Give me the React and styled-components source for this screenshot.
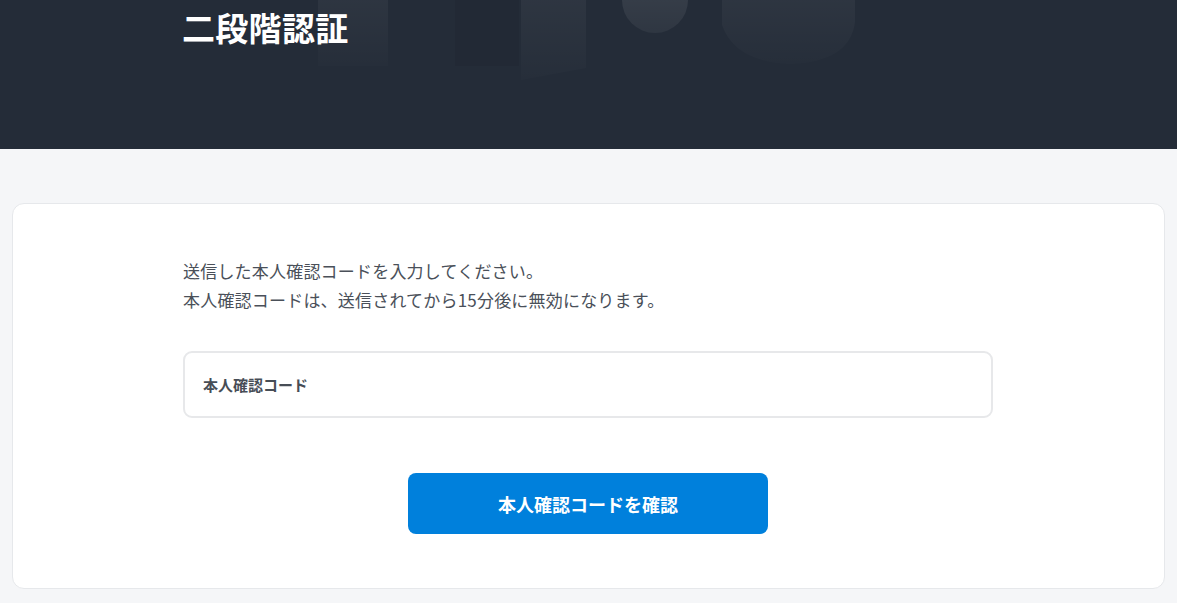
import React from "react";
import styled, { createGlobalStyle } from "styled-components";

const Global = createGlobalStyle`
  html, body {
    margin: 0;
    padding: 0;
    background: #f5f6f8;
    font-family: "Noto Sans CJK JP", "Noto Sans", sans-serif;
  }
`;

const Page = styled.div`
  min-height: 603px;
  background: #f5f6f8;
`;

const Hero = styled.header`
  position: relative;
  height: 149px;
  background: #242c38;
  overflow: hidden;
`;

const Decor = styled.svg`
  position: absolute;
  left: 0;
  top: 0;
  pointer-events: none;
`;

const HeroInner = styled.div`
  position: relative;
  padding: 3px 0 0 182px;
`;

const Title = styled.h1`
  margin: 0;
  color: #ffffff;
  font-size: 33px;
  font-weight: 700;
  line-height: 48px;
  letter-spacing: 0.3px;
`;

const Main = styled.main`
  padding: 54px 12px 14px 12px;
`;

const Card = styled.section`
  background: #ffffff;
  border: 1px solid #e6e8eb;
  border-radius: 12px;
  padding: 52px 171px 55px 170px;
  height: 386px;
  box-sizing: border-box;
`;

const Lead = styled.p`
  margin: 0;
  color: #4a5059;
  font-size: 17px;
  line-height: 29px;
  letter-spacing: 0.2px;
`;

const Field = styled.label`
  display: flex;
  align-items: center;
  margin-top: 37px;
  height: 67px;
  box-sizing: border-box;
  border: 2px solid #e7e8ea;
  border-radius: 9px;
  padding: 0 18px;
  color: #474d56;
  font-size: 15px;
  font-weight: 700;
`;

const Actions = styled.div`
  display: flex;
  justify-content: center;
  margin-top: 55px;
`;

const Button = styled.button`
  width: 360px;
  height: 61px;
  border: none;
  border-radius: 8px;
  background: #0080dc;
  color: #ffffff;
  font-family: inherit;
  font-size: 18px;
  font-weight: 700;
  cursor: pointer;
`;

const HeroDecor = () => (
  <Decor width="1177" height="149" viewBox="0 0 1177 149">
    <defs>
      <linearGradient id="fade" x1="0" y1="0" x2="0" y2="1">
        <stop offset="0" stopColor="#ffffff" stopOpacity="0.05" />
        <stop offset="1" stopColor="#ffffff" stopOpacity="0.01" />
      </linearGradient>
      <linearGradient id="fade2" x1="0" y1="0" x2="0" y2="1">
        <stop offset="0" stopColor="#ffffff" stopOpacity="0.11" />
        <stop offset="1" stopColor="#ffffff" stopOpacity="0.05" />
      </linearGradient>
    </defs>
    <rect x="318" y="-10" width="70" height="76" fill="url(#fade)" />
    <rect x="455" y="-10" width="64" height="76" fill="#000000" opacity="0.05" />
    <path d="M521 -10 H586 V68 L521 80 Z" fill="url(#fade)" />
    <ellipse cx="655" cy="0" rx="33" ry="33" fill="url(#fade2)" />
    <path d="M722 -10 H855 V22 Q850 62 790 64 Q735 62 722 25 Z" fill="url(#fade)" />
  </Decor>
);

export default function App() {
  return (
    <Page>
      <Global />
      <Hero>
        <HeroDecor />
        <HeroInner>
          <Title>二段階認証</Title>
        </HeroInner>
      </Hero>
      <Main>
        <Card>
          <Lead>
            送信した本人確認コードを入力してください。
            <br />
            本人確認コードは、送信されてから15分後に無効になります。
          </Lead>
          <Field>本人確認コード</Field>
          <Actions>
            <Button>本人確認コードを確認</Button>
          </Actions>
        </Card>
      </Main>
    </Page>
  );
}
